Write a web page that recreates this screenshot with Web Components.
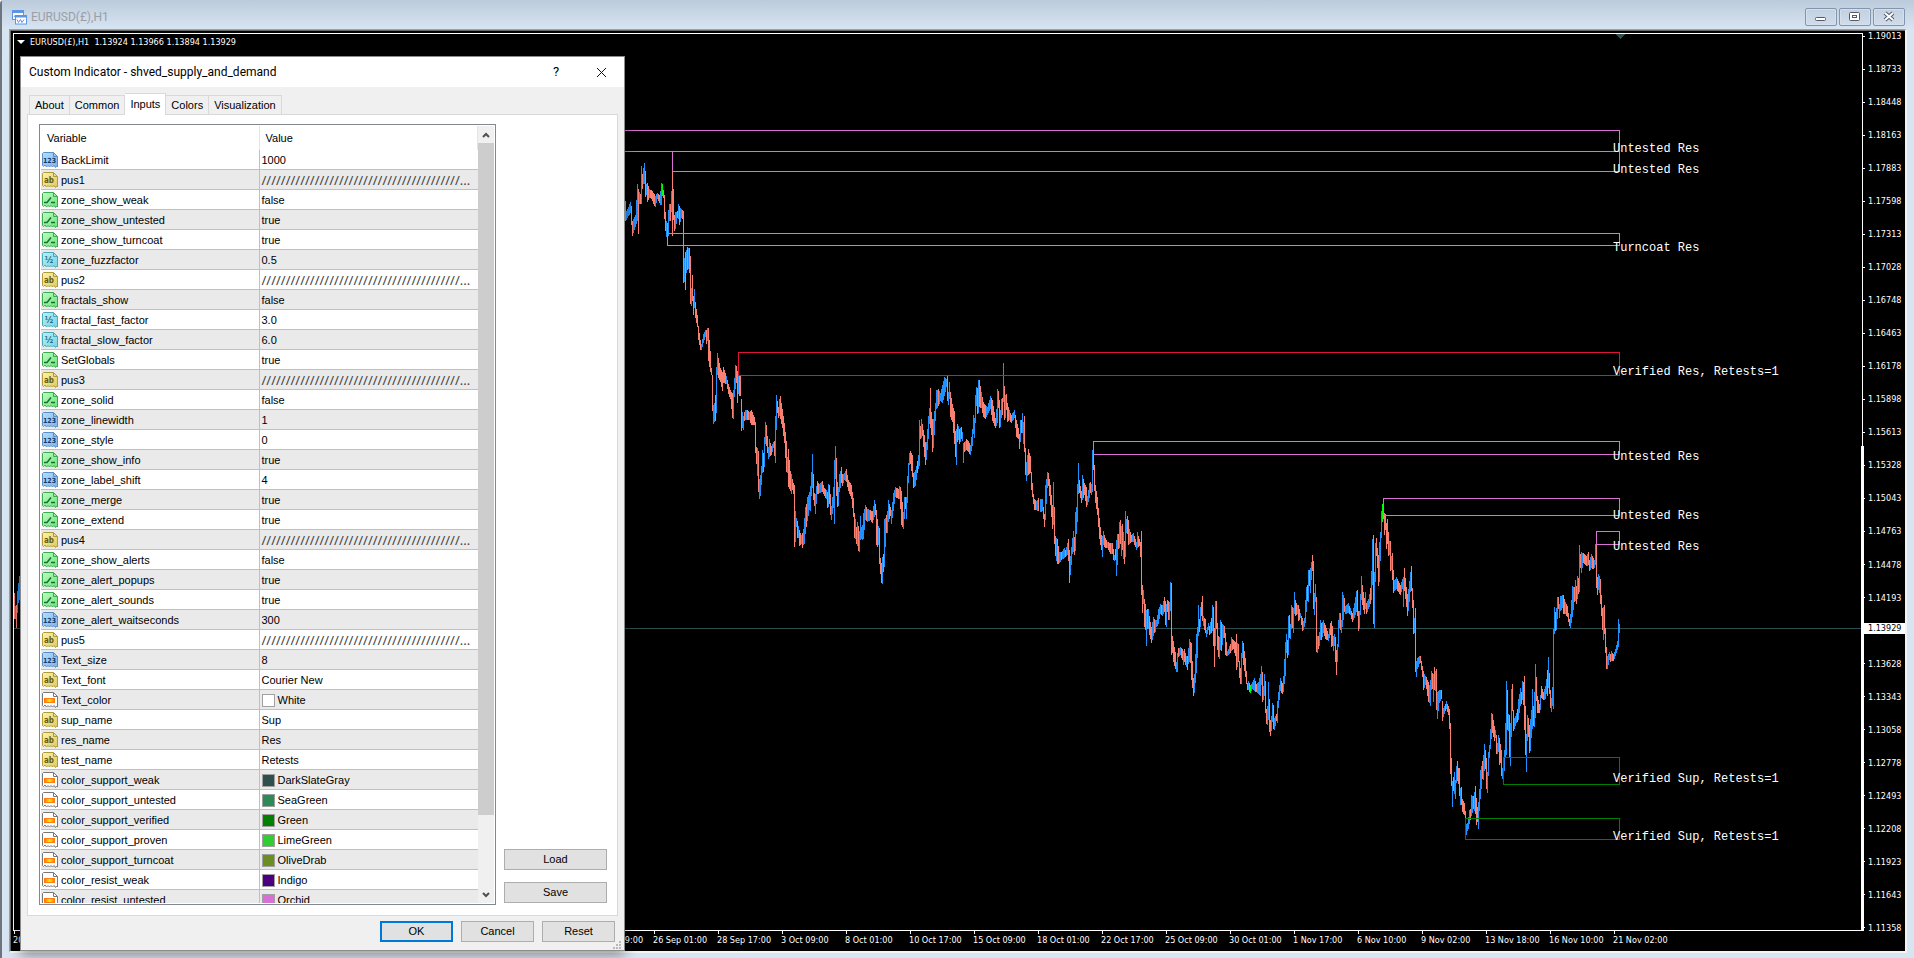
<!DOCTYPE html>
<html lang="en">
<head>
<meta charset="utf-8">
<title>EURUSD(£),H1</title>
<style>
    html, body {
        margin: 0;
        height: 100%;
    }

    body {
        font-family: "Liberation Sans", sans-serif;
        font-size: 11px;
        color: #000;
        overflow: hidden;
        --frame: #d7e4f2;
        --face: #f0f0f0;
        --chart-font: "DejaVu Sans Condensed", "DejaVu Sans", sans-serif;
        --caption-font: Roboto, "Open Sans", sans-serif;
    }
</style>
</head>
<body>

<chart-window caption="EURUSD(£),H1">
    <price-chart></price-chart>
    <indicator-dialog slot="dialog" caption="Custom Indicator - shved_supply_and_demand">
        <variable-list></variable-list>
        <push-button slot="side">Load</push-button>
        <push-button slot="side">Save</push-button>
        <push-button slot="footer" primary>OK</push-button>
        <push-button slot="footer">Cancel</push-button>
        <push-button slot="footer">Reset</push-button>
    </indicator-dialog>
</chart-window>

<template id="chart-window-template">
    <style>
        :host {
            display: flex;
            flex-direction: column;
            position: relative;
            box-sizing: border-box;
            height: 100vh;
            background: var(--frame);
            border-left: 2px solid #6e747b;
            border-top-left-radius: 4px;
        }

        header {
            display: flex;
            align-items: center;
            gap: 4px;
            height: 29px;
            padding: 5px 9px 0 10px;
            box-sizing: border-box;
            background: linear-gradient(#bccbdb, #d7e4f2);
        }

        h1 {
            flex: 1;
            margin: 0;
            font: 12px/16px var(--caption-font);
            color: #9a9ea5;
        }

        .tools {
            display: flex;
            gap: 2px;
        }

        .tools button {
            width: 32px;
            height: 18px;
            padding: 0;
            border: 1px solid #8394ae;
            border-radius: 2px;
            background: linear-gradient(#c3d0df, #cfdceb);
            box-shadow: inset 0 0 0 1px #d5e0ec;
        }

        .tools svg {
            display: block;
            margin: auto;
        }

        main {
            flex: 1;
            display: flex;
            margin: 0 7px 5px;
            border: 1px solid #a0a0a0;
            border-right: 2px solid #f4f4f4;
            border-bottom: 2px solid #f4f4f4;
            box-shadow: inset 1px 1px #696969;
            padding: 1px 0 0 1px;
        }
    </style>
    <header>
        <svg width="15" height="15" viewBox="0 0 15 15" fill="#fff" stroke="#5b95e4" stroke-width="1">
            <rect x="0.5" y="0.5" width="11" height="9"/>
            <path d="M0 2h12" stroke-width="2"/>
            <path d="M2 7l1.500-2 1.500 2 1-2" fill="none"/>
            <rect x="3.500" y="5.500" width="11" height="8.500"/>
            <path d="M3 6.500h12" stroke-width="2"/>
            <path d="M5 9.500l1.500 3 2-3 1.500 3 2-3" fill="none"/>
        </svg>
        <h1></h1>
        <div class="tools">
            <button aria-label="Minimize"><svg width="14" height="14"><rect x="1.500" y="7.500" width="10" height="3" rx="1" fill="#fff" stroke="#555b6b"/></svg></button>
            <button aria-label="Restore"><svg width="14" height="14" fill="#fff" stroke="#555b6b"><rect x="1.500" y="2.500" width="10" height="8" rx="1"/><rect x="4.500" y="5.500" width="4" height="2"/></svg></button>
            <button aria-label="Close"><svg width="14" height="14"><path d="M3 3l8 7M11 3l-8 7" stroke="#555b6b" stroke-width="4"/><path d="M3 3l8 7M11 3l-8 7" stroke="#fff" stroke-width="2"/></svg></button>
        </div>
    </header>
    <main><slot></slot></main>
    <slot name="dialog"></slot>
</template>

<template id="price-chart-template">
    <style>
        :host {
            flex: 1;
            display: grid;
            grid-template: 1fr 20px / 1fr 42px;
            box-sizing: border-box;
            padding: 2px 0 0 2px;
            background: #000;
            color: #fff;
            font: 9px/12px var(--chart-font);
            min-width: 0;
            overflow: hidden;
        }

        .plot {
            position: relative;
            border: 1px solid #fff;
            min-width: 0;
            min-height: 0;
        }

        /* visible range marker on the right border */
        .plot::after {
            content: "";
            position: absolute;
            top: 46%;
            right: -2px;
            bottom: -1px;
            width: 3px;
            background: #fff;
        }

        .plot svg {
            position: absolute;
            width: 100%;
            height: 100%;
        }

        .quote {
            position: absolute;
            top: 2px;
            left: 3px;
            display: flex;
            align-items: center;
            gap: 5px;
            margin: 0;
            white-space: pre;
        }

        .quote i {
            border: 4px solid transparent;
            border-top-color: #fff;
            border-bottom: 0;
        }

        text {
            font: 12px "Liberation Mono", monospace;
            fill: #fff;
        }

        ol {
            list-style: none;
            margin: 0;
            padding: 0;
        }

        .prices {
            position: relative;
            display: flex;
            flex-direction: column;
            justify-content: space-between;
        }

        .prices li {
            display: flex;
            align-items: center;
            gap: 3px;
            height: 6px;
        }

        .prices li::before {
            content: "";
            width: 2px;
            height: 1px;
            background: #fff;
        }

        .prices .gap {
            visibility: hidden;
        }

        .last {
            position: absolute;
            top: 65.700%;
            left: 1px;
            right: 0;
            padding-left: 4px;
            background: #fff;
            color: #000;
            line-height: 11px;
        }

        .times {
            display: grid;
            grid-template-columns: repeat(26, 64px);
            white-space: nowrap;
            overflow: hidden;
        }

        .times li::before {
            content: "";
            display: block;
            width: 1px;
            height: 3px;
            margin-left: 1px;
            background: #fff;
        }
    </style>
    <div class="plot">
        <svg viewBox="14 34 1848 896" shape-rendering="crispEdges"></svg>
        <p class="quote"><i></i><span>EURUSD(£),H1  1.13924 1.13966 1.13894 1.13929</span></p>
    </div>
    <ol class="prices"></ol>
    <ol class="times"></ol>
</template>

<template id="indicator-dialog-template">
    <style>
        :host {
            position: absolute;
            top: 56px;
            left: 18px;
            bottom: 7px;
            width: 605px;
            box-sizing: border-box;
            display: flex;
            flex-direction: column;
            background: var(--face);
            border: 1px solid #8c8c8c;
            box-shadow: 0 4px 12px rgba(0, 0, 0, 0.4);
        }

        header {
            display: flex;
            align-items: center;
            height: 30px;
            padding: 0 13px 0 8px;
            background: #fff;
        }

        h2 {
            flex: 1;
            margin: 0;
            font: 12px/16px var(--caption-font);
        }

        header button {
            width: 20px;
            height: 20px;
            margin-left: 25px;
            padding: 0;
            border: 0;
            background: none;
            font: 13px/20px var(--caption-font);
        }

        header svg {
            display: block;
            margin: auto;
        }

        nav {
            display: flex;
            align-items: flex-end;
            height: 27px;
            padding-left: 8px;
        }

        nav button {
            height: 19px;
            padding: 0 5px;
            border: 1px solid #d9d9d9;
            border-width: 1px 1px 0 0;
            background: var(--face);
            font: 11px/16px "Liberation Sans", sans-serif;
        }

        nav button:first-child {
            border-left-width: 1px;
        }

        nav button[aria-selected="true"] {
            height: 22px;
            padding: 0 5px 2px;
            background: #fff;
            position: relative;
            z-index: 1;
            margin-bottom: -1px;
        }

        .page {
            flex: 1;
            min-height: 0;
            display: flex;
            gap: 8px;
            margin: 0 6px;
            padding: 9px 10px 10px 11px;
            border: 1px solid #d9d9d9;
            background: #fff;
        }

        .side {
            flex: 1;
            display: flex;
            flex-direction: column;
            justify-content: flex-end;
            gap: 12px;
            padding-bottom: 2px;
        }

        footer {
            display: flex;
            justify-content: flex-end;
            gap: 8px;
            padding: 5px 9px 8px;
            position: relative;
        }

        footer ::slotted(*) {
            width: 73px;
        }

        .grip {
            position: absolute;
            right: 3px;
            bottom: 1px;
            fill: #b8b8b8;
        }
    </style>
    <header>
        <h2></h2>
        <button aria-label="Help">?</button>
        <button aria-label="Close"><svg width="11" height="11"><path d="M1 1l9 9M10 1l-9 9" stroke="#111"/></svg></button>
    </header>
    <nav role="tablist">
        <button role="tab">About</button>
        <button role="tab">Common</button>
        <button role="tab" aria-selected="true">Inputs</button>
        <button role="tab">Colors</button>
        <button role="tab">Visualization</button>
    </nav>
    <section class="page">
        <slot></slot>
        <div class="side"><slot name="side"></slot></div>
    </section>
    <footer>
        <slot name="footer"></slot>
        <svg class="grip" width="8" height="8"><path d="M6 0h2v2h-2zM3 3h2v2h-2zM6 3h2v2h-2zM0 6h2v2h-2zM3 6h2v2h-2zM6 6h2v2h-2z"/></svg>
    </footer>
</template>

<template id="push-button-template">
    <style>
        :host {
            display: block;
        }

        button {
            width: 100%;
            height: 21px;
            padding: 0;
            border: 1px solid #adadad;
            background: #e1e1e1;
            font: 11px/17px "Liberation Sans", sans-serif;
        }

        :host([primary]) button {
            border: 2px solid #0078d7;
        }
    </style>
    <button><slot></slot></button>
</template>

<template id="variable-list-template">
    <style>
        :host {
            display: flex;
            box-sizing: border-box;
            width: 457px;
            padding: 1px;
            border: 1px solid #828790;
        }

        .view {
            flex: 1;
            overflow: hidden;
        }

        table {
            width: 100%;
            table-layout: fixed;
            border-collapse: separate;
            border-spacing: 0;
        }

        th {
            height: 24px;
            padding: 0 0 0 6px;
            border-right: 1px solid #e5e5e5;
            font-weight: normal;
            text-align: left;
        }

        td {
            box-sizing: border-box;
            height: 20px;
            padding: 1px 2px 0 1px;
            border-right: 1px solid #c0c0c0;
            border-bottom: 1px solid #c0c0c0;
            white-space: nowrap;
        }

        td:last-child {
            padding-left: 2px;
            border-right: 0;
        }

        tbody tr:nth-child(even) {
            background: #eaeaea;
        }

        .cell {
            display: flex;
            align-items: center;
            gap: 3px;
            height: 18px;
            line-height: 18px;
        }

        .separator {
            font-family: "Noto Sans", sans-serif;
            font-size: 13px;
            color: #444;
        }

        .swatch {
            box-sizing: border-box;
            width: 13px;
            height: 13px;
            border: 1px solid #a0a0a0;
        }

        .bar {
            display: flex;
            flex-direction: column;
            width: 16px;
            background: #f0f0f0;
        }

        .bar button {
            height: 17px;
            padding: 0;
            border: 0;
            background: none;
        }

        .bar svg {
            display: block;
            margin: auto;
            fill: none;
            stroke: #505050;
            stroke-width: 2;
        }

        .track {
            flex: 1;
        }

        .thumb {
            height: 90.400%;
            background: #cdcdcd;
        }
    </style>
    <div class="view">
        <table>
            <thead><tr><th>Variable</th><th>Value</th></tr></thead>
            <tbody></tbody>
        </table>
    </div>
    <div class="bar">
        <button aria-label="Scroll up"><svg width="8" height="6"><path d="M1 5l3-3 3 3"/></svg></button>
        <div class="track"><div class="thumb"></div></div>
        <button aria-label="Scroll down"><svg width="8" height="6"><path d="M1 1l3 3 3-3"/></svg></button>
    </div>
</template>

<template id="type-icon-template">
    <style>
        :host {
            display: block;
            width: 16px;
            height: 16px;
            --light: #fff;
            --dark: #fff;
            --line: #777;
        }

        :host([type="int"]) { --light: #b9dcfa; --dark: #7db2e8; --line: #5590cb; }
        :host([type="string"]) { --light: #fbf3b0; --dark: #dfcb5c; --line: #b19b38; }
        :host([type="bool"]) { --light: #c0fac4; --dark: #6be47a; --line: #3bab4d; }
        :host([type="double"]) { --light: #b8f1f9; --dark: #76d3e3; --line: #4aaabb; }

        #page stop:first-child { stop-color: var(--light); }
        #page stop:last-child { stop-color: var(--dark); }

        text {
            font: bold 7px "DejaVu Sans Condensed", sans-serif;
            text-anchor: middle;
        }
    </style>
    <svg width="16" height="16" viewBox="0 0 16 16">
        <linearGradient id="page" x2="1" y2="1"><stop/><stop offset="1"/></linearGradient>
        <linearGradient id="glow"><stop stop-color="#ff7200"/><stop offset="0.5" stop-color="#fff000"/><stop offset="1" stop-color="#ff7200"/></linearGradient>
        <path d="M0.500 1.500l1-1h10l4 4v10.500l-1-1-1 1.500-1.500-2-1.500 1.500-1.500-1.500-1.500 1.500-1.500-1.500-1.500 1.500-1.500-2-1.500 1.500-1-1z" fill="url(#page)" style="stroke:var(--line)"/>
        <path d="M11.500 0.500v4h4" fill="none" style="stroke:var(--line)"/>
        <g class="mark"></g>
    </svg>
</template>

<script>
    const MARKS = {
        int: '<text x="7.500" y="11" fill="#153a63">123</text>',
        string: '<text x="7" y="11" fill="#6d5908" style="font-size:8px">ab</text>',
        bool: '<path d="M2 10.500h3l4-5M9 10.500h4" fill="none" stroke="#11722a" stroke-width="1.500"/>',
        double: '<text x="7" y="11" fill="#1b6a78" style="font-size:9px">½</text>',
        color: '<rect x="2.500" y="6.500" width="10" height="4" fill="url(#glow)" stroke="#ff7a10"/>'
    };

    const SLASHES = '/'.repeat(41) + '...';

    const VARIABLES = [
        ['int', 'BackLimit', '1000'],
        ['string', 'pus1', SLASHES],
        ['bool', 'zone_show_weak', 'false'],
        ['bool', 'zone_show_untested', 'true'],
        ['bool', 'zone_show_turncoat', 'true'],
        ['double', 'zone_fuzzfactor', '0.5'],
        ['string', 'pus2', SLASHES],
        ['bool', 'fractals_show', 'false'],
        ['double', 'fractal_fast_factor', '3.0'],
        ['double', 'fractal_slow_factor', '6.0'],
        ['bool', 'SetGlobals', 'true'],
        ['string', 'pus3', SLASHES],
        ['bool', 'zone_solid', 'false'],
        ['int', 'zone_linewidth', '1'],
        ['int', 'zone_style', '0'],
        ['bool', 'zone_show_info', 'true'],
        ['int', 'zone_label_shift', '4'],
        ['bool', 'zone_merge', 'true'],
        ['bool', 'zone_extend', 'true'],
        ['string', 'pus4', SLASHES],
        ['bool', 'zone_show_alerts', 'false'],
        ['bool', 'zone_alert_popups', 'true'],
        ['bool', 'zone_alert_sounds', 'true'],
        ['int', 'zone_alert_waitseconds', '300'],
        ['string', 'pus5', SLASHES],
        ['int', 'Text_size', '8'],
        ['string', 'Text_font', 'Courier New'],
        ['color', 'Text_color', 'White'],
        ['string', 'sup_name', 'Sup'],
        ['string', 'res_name', 'Res'],
        ['string', 'test_name', 'Retests'],
        ['color', 'color_support_weak', 'DarkSlateGray'],
        ['color', 'color_support_untested', 'SeaGreen'],
        ['color', 'color_support_verified', 'Green'],
        ['color', 'color_support_proven', 'LimeGreen'],
        ['color', 'color_support_turncoat', 'OliveDrab'],
        ['color', 'color_resist_weak', 'Indigo'],
        ['color', 'color_resist_untested', 'Orchid']
    ];

    const PRICES = ['1.19013', '1.18733', '1.18448', '1.18163', '1.17883', '1.17598', '1.17313',
        '1.17028', '1.16748', '1.16463', '1.16178', '1.15898', '1.15613', '1.15328', '1.15043',
        '1.14763', '1.14478', '1.14193', '', '1.13628', '1.13343', '1.13058', '1.12778', '1.12493',
        '1.12208', '1.11923', '1.11643', '1.11358'];

    // grid column, label
    const TIMES = [[1, '20 Aug 2018'], [10, '21 Sep 09:00'], [11, '26 Sep 01:00'], [12, '28 Sep 17:00'],
        [13, '3 Oct 09:00'], [14, '8 Oct 01:00'], [15, '10 Oct 17:00'], [16, '15 Oct 09:00'],
        [17, '18 Oct 01:00'], [18, '22 Oct 17:00'], [19, '25 Oct 09:00'], [20, '30 Oct 01:00'],
        [21, '1 Nov 17:00'], [22, '6 Nov 10:00'], [23, '9 Nov 02:00'], [24, '13 Nov 18:00'],
        [25, '16 Nov 10:00'], [26, '21 Nov 02:00']];

    // left, top, bottom, colour, label baseline, label
    const ZONES = [
        [40, 130, 151, 'orchid', 152, 'Untested Res'],
        [672, 151, 171, 'orchid', 173, 'Untested Res'],
        [667, 233, 245, 'darkorange', 251, 'Turncoat Res'],
        [738, 352, 375, 'crimson', 375, 'Verified Res, Retests=1'],
        [1093, 441, 454, 'orchid', 460, 'Untested Res'],
        [1383, 498, 515, 'orchid', 519, 'Untested Res'],
        [1596, 531, 544, 'orchid', 550, 'Untested Res'],
        [1503, 757, 784, 'green', 782, 'Verified Sup, Retests=1'],
        [1465, 818, 839, 'green', 840, 'Verified Sup, Retests=1']
    ];

    // Bars as "x,high,low" + direction (u up, d down, g fractal), in thirds of a unit from x/y.
    // Columns missing between two bars are filled in when drawing.
    const SERIES = [
        { x: 0, y: 560, bars: '43,100,178d 46,137,178u 50,135,205d 53,93,158u 56,70,130u 59,48,120u' },
        { x: 620, y: 120, bars: `16,243,302d 20,272,300u 31,247,278u 34,258,315d 37,304,348d 46,285,320u 52,192,304u 55,207,342d
            58,216,252u 61,222,252d 64,138,252u 67,162,207d 70,144,192u 73,129,192u 76,153,230d 79,192,225u 82,190,246d 88,207,234u 94,210,236d
            103,222,258d 106,228,261u 112,218,236u 118,226,248d 121,212,255u 124,189,255u 127,192,228g 130,210,234d 133,225,297d
            136,276,333d 139,303,350u 142,310,348d 145,270,348u 148,252,303u 151,252,303d 154,213,276u 157,155,348d 160,207,300d 163,285,333d
            166,276,327u 172,273,294d 175,252,297u 178,258,315d 184,267,294u 187,270,297d 190,272,489d 193,414,486u 196,396,510d 199,390,459u
            202,381,450d 206,384,447u 208,384,459d 211,408,552d 214,504,558u 217,465,543d 220,528,585d 223,507,564u 226,546,594d 232,585,621d
            235,618,660d 241,660,690d 244,672,690u 250,642,669u 256,630,651u 260,630,672d 263,624,663u 266,624,723d 270,693,756d
            273,744,765d 276,765,828d 278,813,873d 281,855,912u 284,849,906u 287,825,903d 290,741,879u 293,699,765u 296,714,774d
            301,744,786d 307,756,813d 310,741,789d 319,768,792u 325,792,822d 331,810,837d 337,819,894d 340,810,897u 343,774,831u
            347,735,807u 349,738,789d 352,753,849d 355,765,822u 358,765,828d 361,767,828d 364,837,933d 367,876,924u 370,888,930u 373,876,903d 376,870,900u 382,870,900d 388,876,900u
            394,870,915d 403,891,915d 407,906,999d 409,981,1032d 412,984,1068u 416,993,1116d 419,1077,1137u 422,1065,1128u 425,1038,1095u
            428,990,1059u 431,999,1056d 434,951,1041u 437,906,972u 440,915,978d 445,981,1017u 449,957,1011u 454,978,1005d 460,966,984u
            463,963,1008d 467,888,1029u 470,825,930u 473,843,879d 476,861,894d 479,837,888u 482,828,897d 488,867,924d 494,909,969d
            500,963,1056d 503,1011,1059u 506,987,1101d 512,1053,1113d 515,1062,1122u 518,1077,1110d 521,1089,1122d 524,1095,1281d 527,1173,1266u
            530,1194,1221u 533,1203,1254d 536,1218,1254u 539,1230,1278d 545,1245,1272u 548,1239,1284d 551,1227,1275u 554,1194,1272u
            557,1161,1242u 560,1152,1221d 563,1131,1203u 569,1116,1170u 572,1098,1173u 575,1056,1128u 578,1002,1104u 581,1062,1140d
            584,1119,1158d 587,1122,1182u 590,1098,1152u 593,1083,1122d 599,1092,1119u 608,1083,1116d 614,1104,1128d 620,1110,1137u
            623,1116,1164d 626,1092,1161u 629,1095,1152d 632,1122,1185d 635,1158,1200u 641,1101,1164u 643,1020,1212u 646,978,1077u
            649,1014,1128d 652,1086,1161d 655,1101,1158u 659,1062,1116u 664,1041,1089d 668,1062,1098d 674,1059,1080u 679,1047,1086d
            685,1080,1113d 694,1095,1137d 700,1134,1191d 704,1179,1254d 707,1197,1257u 710,1221,1272d 713,1206,1278u 716,1218,1293d
            719,1233,1296u 722,1188,1260u 725,1221,1257u 728,1215,1260u 731,1179,1257u 737,1155,1200u 743,1167,1206u 752,1170,1200d 758,1173,1209d
            764,1140,1191u 767,1152,1185d 770,1170,1275d 773,1197,1281d 776,1218,1275u 779,1224,1332d 781,1314,1362d 784,1329,1389d 787,1311,1392u
            790,1302,1356d 793,1197,1341u 796,1194,1281u 800,1185,1239d 803,1173,1239u 806,1140,1206u 812,1161,1188d 815,1170,1212u
            821,1119,1173u 827,1101,1131u 836,1107,1137d 839,1098,1137u 842,1101,1167d 845,1113,1215d 851,1176,1227u 854,1131,1197u
            857,1131,1167d 860,1131,1197u 863,1068,1149u 866,1029,1089u 869,999,1035u 872,993,1032d 878,1005,1071d 881,1059,1104d
            887,1050,1098u 893,1023,1059d 896,1005,1047u 899,900,1038u 902,918,957d 905,897,954u 908,912,948d 914,945,1011d 917,966,1035d 920,966,1020u
            926,888,957u 929,864,912u 932,804,924d 935,876,945d 938,897,996d 941,897,984u 947,849,903u 950,810,867u 956,807,858d
            962,819,843u 968,795,849u 974,771,828u 980,777,801u 983,767,843d 986,816,855u 989,786,837u 992,816,891d 998,852,906d
            1004,873,972d 1007,933,1011d 1010,927,1035u 1013,912,966d 1016,918,960u 1019,927,972d 1025,921,957d 1028,936,963u 1031,969,1029u 1034,966,996d 1040,957,990d
            1046,963,996d 1052,975,1005u 1058,927,978u 1061,885,942u 1064,894,954u 1067,825,909u 1070,801,858u 1073,804,882d
            1076,780,879u 1079,780,861d 1085,816,864u 1091,846,891d 1097,855,897d 1103,861,885u 1112,828,867u 1118,840,903d
            1127,894,924d 1130,867,918u 1133,807,909u 1136,813,864d 1139,840,924d 1142,870,921u 1145,837,894u 1148,834,885d 1151,729,846u
            1154,798,900d 1157,825,894u 1160,822,870d 1163,849,906d 1169,870,900u 1175,885,909d 1184,870,894u 1190,900,951d
            1196,924,957d 1199,942,987d 1202,900,966u 1205,900,939d 1208,879,939u 1211,906,972u 1214,888,996d 1217,984,1065d
            1220,1026,1083u 1223,1005,1068u 1226,987,1065d 1232,1008,1059d 1235,1056,1110d 1241,1122,1152d 1244,1137,1170d
            1250,1143,1170u 1256,1134,1173d` },
        { x: 1030, y: 340, bars: `30,477,516u 36,477,513u 43,522,561d 46,435,540u 53,396,444u 56,399,438d 61,435,495d 67,495,567d 70,426,555u
            74,501,612d 77,588,648d 80,594,663u 83,597,672d 89,636,669u 95,636,660d 102,624,654u 107,630,651d 113,609,645u 116,597,663d
            119,630,729d 122,648,705u 128,594,642u 131,573,636u 134,591,645d 137,516,633u 140,501,582u 143,432,546u 146,369,462u
            149,420,459d 155,453,489d 158,405,480u 164,429,465d 170,441,501d 173,468,495u 179,429,474u 182,426,459d 185,432,465u
            188,330,456u 191,345,390d 194,375,453d 197,435,489d 203,471,525d 209,534,597d 215,585,630d 218,588,651u 221,573,615u
            227,594,624d 233,606,624u 242,609,642d 248,609,642d 251,627,660d 254,645,663u 257,627,660d 260,600,708u 263,582,675u 266,582,627d
            269,546,624u 272,540,612d 275,558,648u 278,552,630d 281,576,657u 284,603,672d 287,513,651u 290,537,579u 293,528,582d
            296,540,615d 299,567,612u 305,585,606d 311,579,606u 320,606,630u 323,576,624u 329,597,618d 332,606,651d 335,573,765d
            338,735,819d 341,750,792u 344,777,861d 347,792,870d 350,810,918u 353,807,867d 356,807,867u 359,828,885d 365,861,909d
            371,831,888u 374,837,879d 377,840,876u 380,840,861u 386,807,852u 392,792,822u 398,795,828u 404,771,816d 407,783,855d 410,792,861u
            413,780,816d 416,783,840d 419,786,840u 422,726,813u 425,729,945d 428,888,939d 431,903,966d 437,936,987d 440,966,996u
            443,939,996u 446,924,951d 452,921,945u 458,927,960d 461,933,975u 464,927,966d 470,948,981u 473,948,990d 476,924,972u
            479,897,966u 482,906,969d 485,909,1020d 491,1014,1068d 494,1002,1059u 500,882,999u 503,861,954u 506,795,888u 509,837,876d 512,801,861u
            515,786,828d 518,768,843d 521,828,858u 527,837,879d 530,870,891u 536,849,870u 539,858,885d 545,834,879d 548,795,873u
            551,801,918d 554,864,981d 557,783,918u 560,783,867d 563,849,930d 566,888,951d 569,891,957u 572,840,930u 575,846,933d
            581,855,894u 584,858,894d 587,879,945d 593,933,948u 602,912,939d 605,891,933u 611,900,927d 617,906,948d 620,882,990d
            623,909,981u 626,912,966d 629,963,1014d 632,984,1032d 635,939,1032u 638,903,954u 641,909,975d 647,954,1011d 653,1029,1050d
            656,1023,1050u 661,1035,1059g 668,1026,1047u 674,1014,1053u 680,1032,1056d 686,1026,1062u 692,1002,1068u 695,978,1035u
            698,996,1086d 701,1038,1080u 704,1002,1068u 707,1023,1119d 710,1107,1152d 713,1098,1155u 716,1026,1140u 719,1077,1176d
            722,1140,1188d 725,1128,1173u 728,1089,1146u 731,1095,1167d 734,1134,1170u 740,1122,1143d 743,1083,1149u 746,1056,1104u
            752,1014,1053u 758,1029,1062d 761,1008,1056u 767,906,1008u 770,882,939u 773,900,954d 776,828,945u 779,825,894d
            782,852,897u 785,795,867u 788,801,864d 791,804,879u 794,756,822u 797,780,828d 803,795,822u 806,795,843d 812,819,834u
            818,834,873d 821,843,870u 824,834,861u 827,780,849u 830,741,816u 833,735,783d 836,690,786u 839,690,738d 842,684,759u
            845,666,720u 848,645,693d 851,663,807d 854,759,825u 857,732,786u 860,771,936d 863,888,939u 866,888,927d 869,876,918u
            872,840,900u 875,849,900d 881,840,879u 887,855,897d 896,882,903u 902,849,885d 905,843,921d 908,858,918d 911,888,933u
            914,882,918u 917,891,966d 920,930,1005d 923,912,966u 926,840,921u 929,819,864u` },
        { x: 1340, y: 480, bars: `1,399,449d 5,420,459u 8,336,441u 13,354,396d 16,378,402u 26,369,399u 32,384,405u 38,399,426d 44,369,414u
            50,333,396u 53,330,408d 56,393,453d 59,393,447u 62,342,405u 65,288,360u 68,315,375d 74,354,402d 77,336,387u 80,369,402d
            86,357,387u 92,324,372d 95,273,360u 98,177,315u 101,165,432d 104,276,444u 107,189,306u 110,174,228d 113,204,264d
            116,225,318d 119,186,306u 122,156,243u 125,93,174u 128,72,126g 131,99,117d 134,99,165d 137,102,150d 140,129,207d
            143,117,192d 146,156,228d 149,183,225u 152,183,273d 155,228,270u 158,219,300d 161,270,339d 164,300,333u 170,291,327u
            176,303,336d 182,315,345d 188,297,327u 191,291,381u 194,264,333d 200,321,381d 203,342,408d 206,327,393u 212,276,336u
            215,258,333d 218,324,384d 221,360,462d 224,414,459u 227,384,576d 230,543,591u 233,534,567u 239,528,552u 242,528,549d
            248,558,591d 251,573,630d 257,588,615u 260,591,627d 266,606,666d 269,615,669u 272,600,678u 275,573,630u 278,579,627d
            281,582,666u 284,561,630d 287,573,633u 290,567,690d 293,636,717u 299,630,669u 305,630,657d 308,663,723d 311,684,711u
            317,672,693d 320,663,687u 326,678,705d 329,687,747d 332,729,882d 335,834,918d 338,903,981u 341,891,933d 344,876,942u
            347,900,957u 350,858,909u 353,843,903d 356,864,912d 359,864,948d 362,924,975u 365,921,975d 368,957,996d 374,969,1005d
            377,993,1015d 380,1032,1065u 383,1029,1053u 386,1011,1047u 389,990,1032u 392,987,1020d 395,945,1008u 401,948,987d
            404,936,993u 407,918,1002d 410,954,1035d 413,981,1026d 416,966,1047u 419,927,993u 422,870,957u 428,843,897d 431,825,900u
            434,792,873u 437,810,867d 440,834,927d 443,876,939u 446,816,888u 449,795,834u 455,699,777u 458,702,759d 464,738,783d
            467,750,774u 470,765,822d 473,789,822u 476,765,816u 479,774,855d 482,792,849d 485,810,888d 488,864,897u 491,834,864d
            494,810,873u 497,729,831u 500,603,825u 503,630,750d 506,702,753u 509,705,831d 512,729,858u 515,627,771u 518,612,693d
            521,690,753d 524,714,747u 530,699,729u 533,687,726d 536,657,720u 542,624,678u 545,636,672d 548,603,660u 551,606,675d
            554,588,750d 557,678,825d 560,762,876u 563,705,783u 566,714,771d 569,735,819d 572,717,813u 575,690,774u 578,627,747u
            581,678,738d 584,636,741u 587,552,714u 590,591,663d 593,648,699d 599,672,699d 602,645,690u 605,618,654d 611,636,660d
            617,618,657u 620,597,642u 623,570,648d 626,531,624u 629,579,642d 632,630,684d 635,654,696u 638,621,678u 641,447,687u
            644,381,462u 647,396,453d 650,384,450u 653,351,417u 656,351,387d 659,372,414u 662,348,393u 668,345,384u 671,345,402d
            677,366,402u 683,378,411d 689,417,438d 692,402,444u 698,318,411u 704,321,366d 707,300,363u 710,318,372d 713,288,357u
            716,294,342d 719,195,336u 722,222,264d 725,216,279u 731,219,249d 740,228,258d 746,216,255d 749,240,273d 755,222,264u
            758,228,267d 764,240,264u 767,192,255u 770,195,324d 773,291,345d 776,282,330u 779,288,339u 782,297,372d 785,345,408d
            788,384,450d 791,381,480u 794,375,462d 797,444,519d 800,501,567d 803,528,567u 809,516,540u 812,522,546d 815,513,543u
            821,522,543d 827,507,528u 833,483,510u 836,417,501u 839,432,459u` }
    ];

    const BAR_COLORS = { u: '#1e90ff', d: '#fa8072', g: '#00ff00' };

    class BaseElement extends HTMLElement {
        constructor() {
            super();
            this.attachShadow({ mode: 'open' });
            const template = document.getElementById(this.localName + '-template');
            this.shadowRoot.appendChild(template.content.cloneNode(true));
        }

        $(selector) {
            return this.shadowRoot.querySelector(selector);
        }
    }

    class ChartWindow extends BaseElement {
        connectedCallback() {
            this.$('h1').textContent = this.getAttribute('caption');
        }
    }

    class IndicatorDialog extends BaseElement {
        connectedCallback() {
            this.$('h2').textContent = this.getAttribute('caption');
        }
    }

    class PushButton extends BaseElement {}

    class TypeIcon extends BaseElement {
        connectedCallback() {
            this.$('.mark').innerHTML = MARKS[this.getAttribute('type')];
        }
    }

    class VariableList extends BaseElement {
        connectedCallback() {
            this.$('tbody').innerHTML = VARIABLES.map(([type, name, value]) => {
                const swatch = type === 'color' ? `<span class="swatch" style="background:${value}"></span>` : '';
                const kind = value === SLASHES ? 'cell separator' : 'cell';
                return `<tr>
                    <td><div class="cell"><type-icon type="${type}"></type-icon>${name}</div></td>
                    <td><div class="${kind}">${swatch}${value}</div></td>
                </tr>`;
            }).join('');
        }
    }

    class PriceChart extends BaseElement {
        connectedCallback() {
            this.$('svg').innerHTML = this.drawLastPrice() + this.drawBars() + this.drawZones();

            this.$('.prices').innerHTML = PRICES.map(p => `<li${p ? '' : ' class="gap"'}>${p}</li>`).join('') +
                '<div class="last">1.13929</div>';

            this.$('.times').innerHTML = TIMES.map(([col, label]) =>
                `<li style="grid-column:${col}">${label}</li>`).join('');
        }

        drawLastPrice() {
            return '<path d="M14 628.500H1862" stroke="#2f4f4f"/><path d="M1616 34h9l-4.500 5z" fill="#2f4f4f"/>';
        }

        drawBars() {
            const paths = { u: '', d: '', g: '' };
            const put = (x, high, low, dir) => {
                paths[dir] += `M${x} ${Math.round(high)}h1V${Math.round(low)}h-1z`;
            };

            SERIES.forEach(series => {
                let prev = null;
                series.bars.split(/\s+/).forEach(item => {
                    const [a, b, c] = item.slice(0, -1).split(',').map(Number);
                    const bar = {
                        x: series.x + Math.floor(a / 3),
                        high: series.y + b / 3,
                        low: series.y + c / 3,
                        dir: item.slice(-1)
                    };
                    if (prev) {
                        const span = bar.x - prev.x;
                        for (let i = 1; i < span; i++) {
                            const t = i / span;
                            const dir = bar.high + bar.low > prev.high + prev.low ? 'd' : 'u';
                            put(prev.x + i, prev.high + (bar.high - prev.high) * t, prev.low + (bar.low - prev.low) * t, dir);
                        }
                    }
                    put(bar.x, bar.high, bar.low, bar.dir);
                    prev = bar;
                });
            });

            return Object.keys(paths).map(dir => `<path d="${paths[dir]}" fill="${BAR_COLORS[dir]}"/>`).join('');
        }

        drawZones() {
            const boxes = ZONES.map(([x, top, bottom, color]) =>
                `<path d="M${x}.500 ${top}.500H1619.500V${bottom}.500H${x}.500z" fill="none" stroke="${color}"/>`);
            const labels = ZONES.map(zone => `<text x="1613" y="${zone[4]}">${zone[5]}</text>`);
            return boxes.concat(labels).join('');
        }
    }

    customElements.define('type-icon', TypeIcon);
    customElements.define('push-button', PushButton);
    customElements.define('variable-list', VariableList);
    customElements.define('indicator-dialog', IndicatorDialog);
    customElements.define('price-chart', PriceChart);
    customElements.define('chart-window', ChartWindow);
</script>
</body>
</html>
